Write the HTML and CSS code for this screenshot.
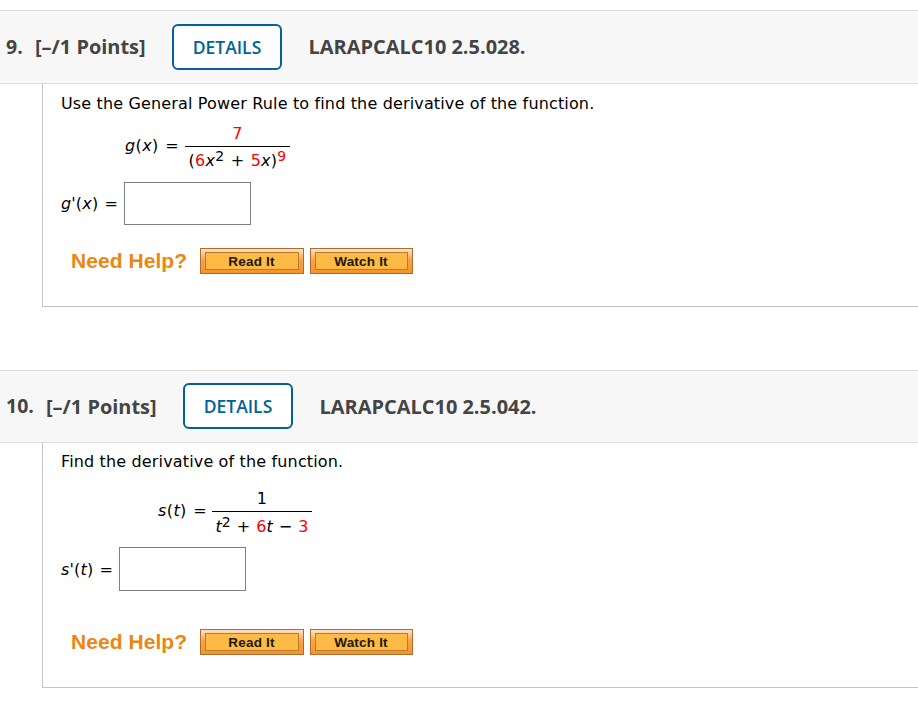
FILE: index.html
```html
<!doctype html>
<html lang="en">
<head>
	<meta charset="UTF-8">
	<title>Homework</title>
	<link rel="stylesheet" href="styles.css">
</head>
<body>
	<div class="question q9">
		<div class="head">
			<span class="num">9.</span>
			<span class="points">[–/1 Points]</span>
			<a href="#" class="details">DETAILS</a>
			<span class="code">LARAPCALC10 2.5.028.</span>
		</div>
		<div class="content">
			<p class="text">Use the General Power Rule to find the derivative of the function.</p>
			<div class="formula">
				<span class="left"><i>g</i>(<i>x</i>) =</span>
				<span class="frac">
					<span class="top red">7</span>
					<span class="bottom">(<b>6</b><i>x</i><sup>2</sup> + <b>5</b><i>x</i>)<sup class="red">9</sup></span>
				</span>
			</div>
			<div class="answer">
				<label for="a9"><i>g</i>'(<i>x</i>) =</label>
				<input type="text" id="a9">
			</div>
			<div class="help">
				<span class="need">Need Help?</span>
				<a href="#" class="btn"><span>Read It</span></a>
				<a href="#" class="btn watch"><span>Watch It</span></a>
			</div>
		</div>
	</div>
	<div class="question q10">
		<div class="head">
			<span class="num">10.</span>
			<span class="points">[–/1 Points]</span>
			<a href="#" class="details">DETAILS</a>
			<span class="code">LARAPCALC10 2.5.042.</span>
		</div>
		<div class="content">
			<p class="text">Find the derivative of the function.</p>
			<div class="formula">
				<span class="left"><i>s</i>(<i>t</i>) =</span>
				<span class="frac">
					<span class="top">1</span>
					<span class="bottom"><i>t</i><sup>2</sup> + <b>6</b><i>t</i> − <b>3</b></span>
				</span>
			</div>
			<div class="answer">
				<label for="a10"><i>s</i>'(<i>t</i>) =</label>
				<input type="text" id="a10">
			</div>
			<div class="help">
				<span class="need">Need Help?</span>
				<a href="#" class="btn"><span>Read It</span></a>
				<a href="#" class="btn watch"><span>Watch It</span></a>
			</div>
		</div>
	</div>
</body>
</html>
```
FILE: styles.css
```css
*{margin: 0;padding: 0;box-sizing: border-box;}
body{background: #fff;color: #000;font: 16px/20px Verdana, "DejaVu Sans", sans-serif;letter-spacing: .15px;padding-top: 10px;}
a{text-decoration: none;}
.question{margin-bottom: 63px;}
.q10{margin-bottom: 0;}
.head{display: flex;align-items: center;height: 74px;padding-left: 6px;background: #f7f7f7;border-top: 1px solid #ddd;border-bottom: 1px solid #ddd;
	font: bold 19.95px/26px "Open Sans", sans-serif;letter-spacing: 0;color: #444;white-space: nowrap;}
.q10 .head{height: 73px;}
.num{width: 29px;font-size: 19.5px;}
.q10 .num{width: 40px;padding-bottom: 2px;}
.points{width: 137px;}
.details{width: 110px;height: 46px;margin-right: 26.6px;border: 2px solid #006298;border-radius: 6px;background: #fff;color: #006298;
	font-size: 17.5px;font-weight: 600;line-height: 42px;text-align: center;}
.q10 .details{margin-bottom: 2px;}
.content{height: 223px;margin-left: 42px;padding: 10px 0 0 18px;border-left: 1px solid #c4c4c4;border-bottom: 1px solid #c4c4c4;white-space: nowrap;}
.q10 .content{height: 245px;padding-top: 9px;}
.formula{display: flex;height: 50px;margin: 10px 0 0 64px;}
.q10 .formula{margin: 17px 0 0 97px;}
.left{width: 60px;padding-top: 12px;letter-spacing: .4px;word-spacing: 1px;}
.q10 .left{width: 54px;}
.frac{display: flex;flex-direction: column;width: 105px;text-align: center;}
.q10 .frac{width: 100px;}
.top{height: 23px;border-bottom: 1px solid #000;}
.bottom{padding-top: 4px;letter-spacing: .25px;word-spacing: 1px;}
.q10 .bottom{padding-top: 5px;letter-spacing: 0;}
.bottom b{font-weight: normal;color: #f00;}
.red{color: #f00;}
sup{font-size: 14px;line-height: 0;vertical-align: 5px;}
.answer{display: flex;align-items: center;height: 43px;margin-top: 8px;}
.q10 .answer{height: 44px;}
.answer label{width: 63px;word-spacing: 1px;}
.q10 .answer label{width: 58px;padding-top: 1px;}
.answer input{width: 127px;height: 100%;border: 1px solid #808080;background: #fff;}
.help{display: flex;align-items: center;height: 26px;margin: 23px 0 0 10px;}
.q10 .help{margin-top: 38px;}
.need{width: 129px;color: #ed8611;font: bold 21px/26px "Liberation Sans", Arial, sans-serif;letter-spacing: .05px;}
.btn{width: 104px;height: 26px;margin-right: 6px;padding: 3px 4px;border: 1px solid #ae6d2a;background: linear-gradient(#fde2c8, #fba24b 45%, #f5922f);}
.btn span{display: block;height: 18px;padding-right: 1px;border: 1px solid #b97c2c;background: #fdba44;color: #221704;
	font: bold 13.5px/18px "Liberation Sans", Arial, sans-serif;letter-spacing: .2px;text-align: center;}
.btn.watch{width: 103px;}
```
